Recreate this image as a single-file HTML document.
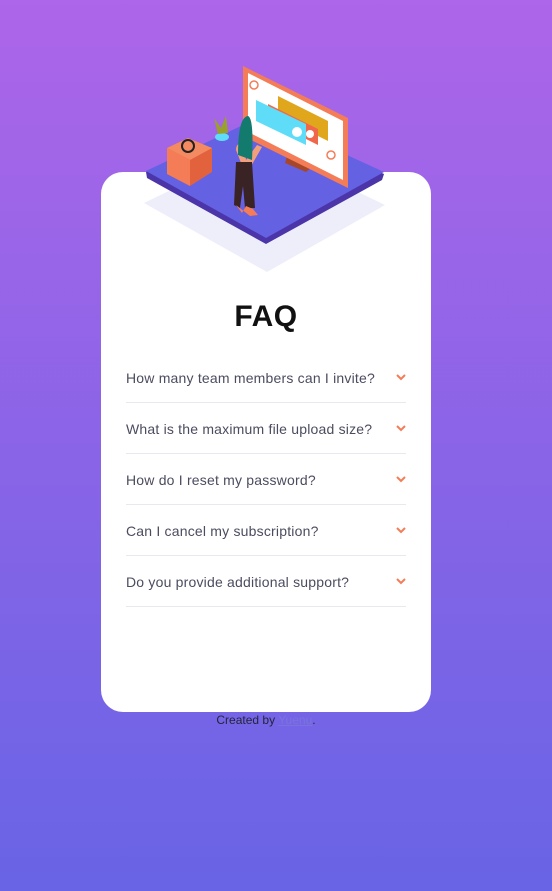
<!DOCTYPE html>
<html><head><meta charset="utf-8"><style>
*{margin:0;padding:0;box-sizing:border-box}
body{width:552px;height:891px;overflow:hidden;background:linear-gradient(180deg,#ad65e9 0%,#6864e5 100%);font-family:"Liberation Sans",sans-serif;position:relative}
.card{position:absolute;left:101px;top:172px;width:330px;height:540px;background:#fff;border-radius:22px}
h1{position:absolute;left:0;width:330px;top:128px;text-align:center;font-size:30px;font-weight:bold;color:#111;letter-spacing:0.5px}
.row{position:absolute;left:25px;width:280px;height:51px;border-bottom:1px solid #e8e8ee;font-size:14px;color:#4b4c5f;letter-spacing:0.2px}
.row span{position:absolute;left:0;top:18px}
.row svg{position:absolute;right:0;top:22px}
.foot{position:absolute;top:713px;left:0;width:532px;text-align:center;font-size:12px;color:#23263a}
.foot a{color:#7a73de;text-decoration:underline}
svg.ill{position:absolute;left:0;top:0}
</style></head><body>
<div class="card">
<h1>FAQ</h1>
<div class="row" style="top:180px"><span>How many team members can I invite?</span><svg width="10" height="7"><path d="M1 1l4 4 4-4" stroke="#f47c57" stroke-width="2" fill="none"/></svg></div>
<div class="row" style="top:231px"><span>What is the maximum file upload size?</span><svg width="10" height="7"><path d="M1 1l4 4 4-4" stroke="#f47c57" stroke-width="2" fill="none"/></svg></div>
<div class="row" style="top:282px"><span>How do I reset my password?</span><svg width="10" height="7"><path d="M1 1l4 4 4-4" stroke="#f47c57" stroke-width="2" fill="none"/></svg></div>
<div class="row" style="top:333px"><span>Can I cancel my subscription?</span><svg width="10" height="7"><path d="M1 1l4 4 4-4" stroke="#f47c57" stroke-width="2" fill="none"/></svg></div>
<div class="row" style="top:384px"><span>Do you provide additional support?</span><svg width="10" height="7"><path d="M1 1l4 4 4-4" stroke="#f47c57" stroke-width="2" fill="none"/></svg></div>
</div>
<svg class="ill" width="552" height="300">
<path d="M144 203 L262 146 L385 205 L267 272 Z" fill="#eeeefb"/>
<path d="M146 172 L262 118 L384 174 L382 180 L266 244 L147 178 Z" fill="#4b35a8"/>
<path d="M146 171 L262 116 L384 172 L266 238 Z" fill="#6461e3"/>
<path d="M289 150 L318 162 L306 172 L285 163Z" fill="#a7472a"/>
<path d="M243 66 L348 118 L348 188 L243 136 Z" fill="#f47c57"/>
<path d="M248 73 L343 121 L343 180 L248 132 Z" fill="#fff"/>
<path d="M278 96 L328 121 L328 141 L278 116Z" fill="#e0a71c"/>
<path d="M268 104 L318 129 L318 145 L268 120Z" fill="#f0684c"/>
<path d="M256 100 L306 124 L306 145 L256 121Z" fill="#5fdcf7"/>
<circle cx="297" cy="132" r="5" fill="#fff"/><circle cx="310" cy="134" r="4" fill="#fff"/>
<circle cx="254" cy="85" r="4" fill="none" stroke="#f47c57" stroke-width="1.5"/>
<circle cx="331" cy="155" r="4" fill="none" stroke="#f47c57" stroke-width="1.5"/>
<path d="M167 148 L188 138 L212 148 L212 172 L190 186 L167 174Z" fill="#e2623e"/>
<path d="M167 148 L188 138 L212 148 L190 160Z" fill="#f38a62"/>
<path d="M167 148 L190 160 L190 186 L167 174Z" fill="#f47c57"/>
<circle cx="188" cy="146" r="6" fill="none" stroke="#222" stroke-width="2"/>
<ellipse cx="222" cy="137" rx="7" ry="4" fill="#5fdcf7"/>
<path d="M218 134 L214 118 L221 128 L226 116 L228 133Z" fill="#9aa12a"/>
<path d="M236 150 Q236 142 244 144 L246 160 L257 145 L262 147 L250 168 L243 168Z" fill="#f2a07b"/>
<path d="M236 162 L252 162 L255 208 L245 208 L243 186 L240 208 L234 205Z" fill="#3a2324"/>
<path d="M236 205 L242 213 L246 206 L253 209 L258 215 L250 216Z" fill="#f47c57"/>
<path d="M238 155 Q238 117 248 116 Q254 118 252 160 Z" fill="#137a6e"/>
</svg>
<div class="foot">Created by <a>Yuenu</a>.</div>
</body></html>
